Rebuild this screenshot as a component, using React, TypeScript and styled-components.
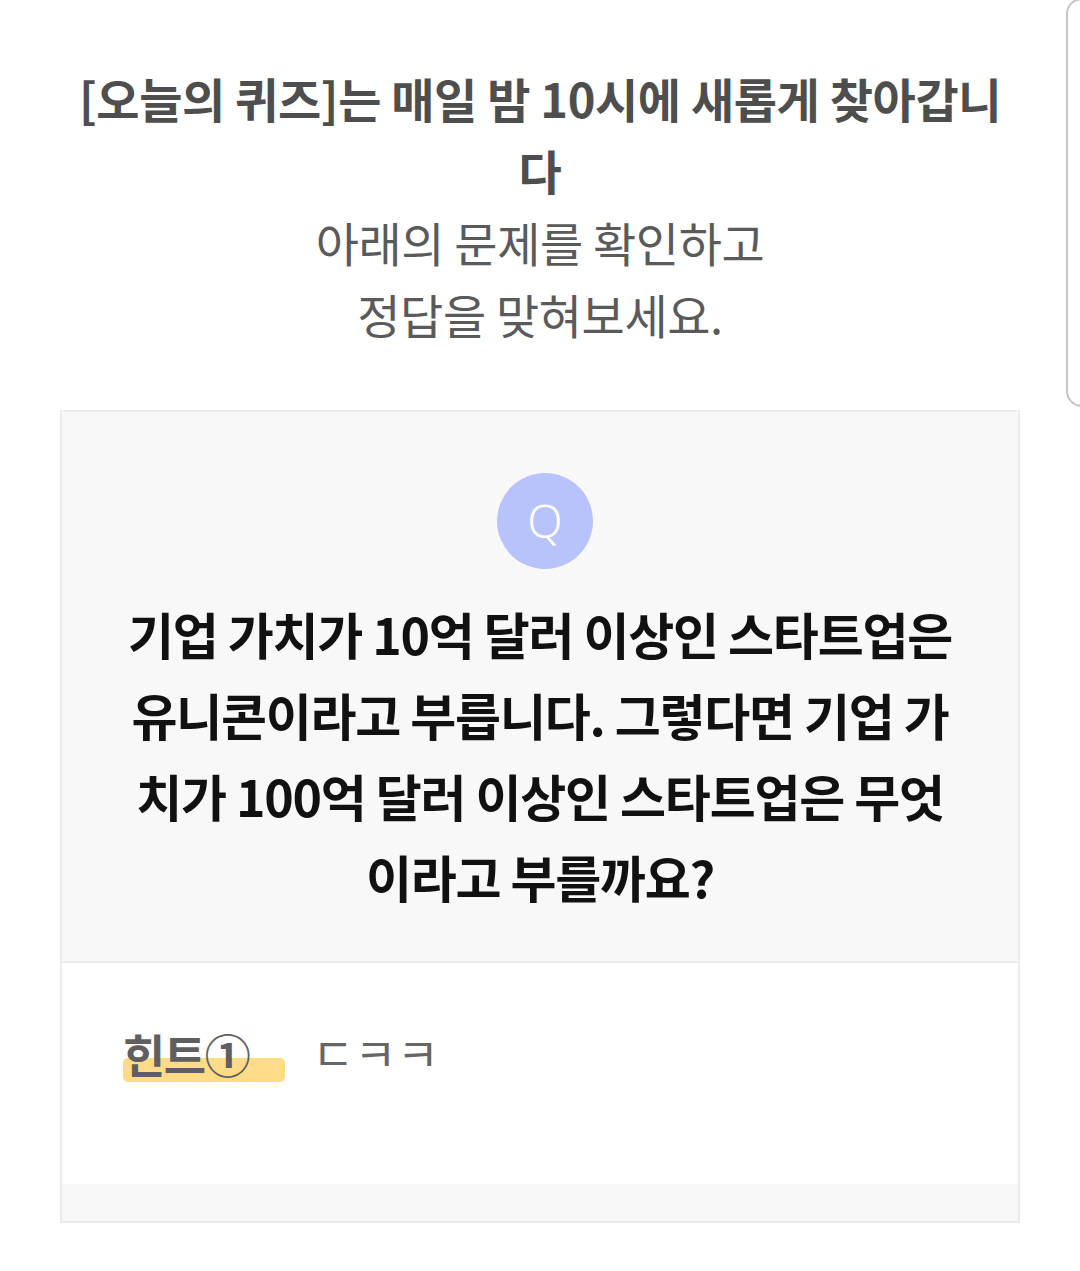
import React from "react";
import styled, { createGlobalStyle } from "styled-components";

const GlobalStyle = createGlobalStyle`
  html, body {
    margin: 0;
    padding: 0;
    background: #ffffff;
  }
  body {
    font-family: "Noto Sans CJK KR", "Noto Sans", sans-serif;
    -webkit-font-smoothing: antialiased;
  }
`;

const Page = styled.div`
  position: relative;
  width: 1080px;
  min-height: 1271px;
  overflow: hidden;
  background: #fff;
`;

const EdgeTab = styled.div`
  position: absolute;
  top: -2px;
  left: 1066px;
  width: 40px;
  height: 409px;
  border: 2px solid #c6c6c6;
  border-radius: 16px;
  box-sizing: border-box;
`;

const Intro = styled.div`
  padding: 62px 60px 0;
  text-align: center;
`;

const IntroLine = styled.p<{ $bold?: boolean }>`
  margin: 0;
  font-size: 47px;
  line-height: 72px;
  font-weight: ${(p) => (p.$bold ? 700 : 400)};
  color: ${(p) => (p.$bold ? "#4e4e4e" : "#5a5a5a")};
  letter-spacing: -0.4px;
`;

const Card = styled.section`
  margin: 60px 60px 0;
  border: 2px solid #ebebeb;
  background: #f8f8f8;
`;

const QuestionArea = styled.div`
  display: flex;
  flex-direction: column;
  align-items: center;
  padding: 61px 56px 44px;
  border-bottom: 2px solid #ebebeb;
`;

const QBadge = styled.div`
  width: 96px;
  height: 96px;
  margin-left: 10px;
  border-radius: 50%;
  background: #b8c3fb;
  color: #fff;
  display: flex;
  align-items: center;
  justify-content: center;
  font-family: "Noto Sans", sans-serif;
  font-weight: 300;
  font-size: 46px;
  line-height: 1;
  padding-bottom: 2px;
  box-sizing: border-box;
`;

const QuestionText = styled.p`
  margin: 24px 0 0;
  font-size: 50px;
  line-height: 81px;
  font-weight: 700;
  color: #111;
  text-align: center;
  letter-spacing: -1.2px;
`;

const HintArea = styled.div`
  background: #fff;
  height: 221px;
  display: flex;
  align-items: center;
  padding: 0 61px 42px;
  box-sizing: border-box;
`;

const HintRow = styled.div`
  display: flex;
  align-items: center;
  gap: 27px;
`;

const HintLabel = styled.span`
  position: relative;
  z-index: 0;
  display: inline-block;
  width: 162px;
  font-size: 46px;
  line-height: 54px;
  font-weight: 700;
  color: #5f5f5f;
  letter-spacing: -1.5px;
  &::after {
    content: "";
    position: absolute;
    z-index: -1;
    left: 0;
    right: 0;
    bottom: -2px;
    height: 24px;
    border-radius: 5px;
    background: #fddb87;
  }
`;

const HintValue = styled.span`
  font-size: 46px;
  line-height: 54px;
  font-weight: 400;
  color: #666;
  letter-spacing: 0px;
  margin-top: -4px;
`;

const CardFooter = styled.div`
  height: 37px;
  background: #f8f8f8;
`;

export default function App() {
  return (
    <Page>
      <GlobalStyle />
      <EdgeTab />
      <Intro>
        <IntroLine $bold>
          [오늘의 퀴즈]는 매일 밤 10시에 새롭게 찾아갑니
          <br />다
        </IntroLine>
        <IntroLine>아래의 문제를 확인하고</IntroLine>
        <IntroLine>정답을 맞혀보세요.</IntroLine>
      </Intro>
      <Card>
        <QuestionArea>
          <QBadge>Q</QBadge>
          <QuestionText>
            기업 가치가 10억 달러 이상인 스타트업은 유니콘이라고 부릅니다.
            그렇다면 기업 가치가 100억 달러 이상인 스타트업은 무엇이라고
            부를까요?
          </QuestionText>
        </QuestionArea>
        <HintArea>
          <HintRow>
            <HintLabel>힌트①</HintLabel>
            <HintValue>ㄷㅋㅋ</HintValue>
          </HintRow>
        </HintArea>
        <CardFooter />
      </Card>
    </Page>
  );
}
